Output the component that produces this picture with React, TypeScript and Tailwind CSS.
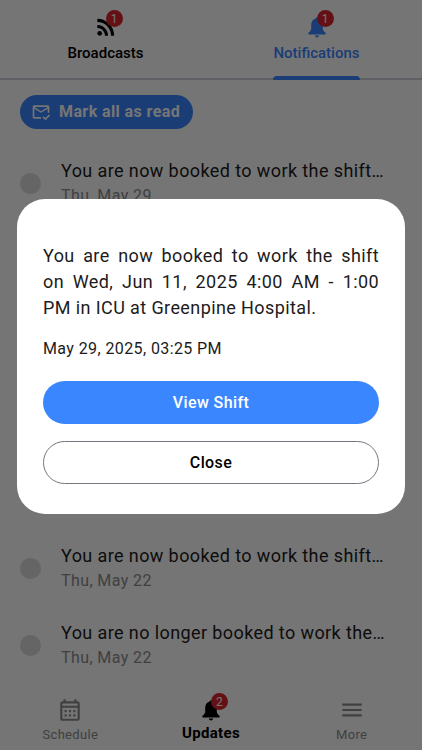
import React, { ReactNode } from 'react'
import {
  MdMenu,
  MdOutlineCalendarMonth,
  MdOutlineMarkEmailRead,
  MdRssFeed,
} from 'react-icons/md'

type Notification = {
  id: number
  message: string
  date: string
}

const notifications: Notification[] = [
  { id: 1, message: 'You are now booked to work the shift…', date: 'Thu, May 29' },
  { id: 2, message: 'You are now booked to work the shift…', date: 'Thu, May 29' },
  { id: 3, message: 'You are now booked to work the shift…', date: 'Wed, May 28' },
  { id: 4, message: 'You are now booked to work the shift…', date: 'Tue, May 27' },
  { id: 5, message: 'You are now booked to work the shift…', date: 'Fri, May 23' },
  { id: 6, message: 'You are now booked to work the shift…', date: 'Thu, May 22' },
  { id: 7, message: 'You are no longer booked to work the…', date: 'Thu, May 22' },
]

const BellIcon = () => (
  <svg width="26" height="26" viewBox="0 0 26 26" fill="currentColor" aria-hidden="true">
    <path d="M13 3.4c.9 0 1.500.6 1.600 1.400 2.900.7 4.200 3.100 4.200 6.200v3.600c0 1.800 1.200 3 2.400 4 .3.200.4.500.4.800v.6c0 .4-.3.600-.6.600H5c-.3 0-.6-.2-.6-.6v-.6c0-.3.1-.6.4-.8 1.200-1 2.400-2.200 2.400-4V11c0-3.100 1.300-5.500 4.200-6.200.1-.8.7-1.400 1.600-1.400z" />
    <path d="M10.900 21.400h4.200c-.2 1.200-1 2-2.100 2s-1.900-.8-2.100-2z" />
  </svg>
)

const IconWithBadge = ({ count, children }: { count: number; children: ReactNode }) => (
  <span className="relative">
    {children}
    <span className="absolute -top-1 left-[13px] flex h-[17px] w-[17px] items-center justify-center rounded-full bg-[#d9232e] text-xs leading-none font-normal tracking-normal text-white">
      {count}
    </span>
  </span>
)

const Tabs = () => (
  <nav className="grid grid-cols-2 border-b-2 border-[#cfd1d8] text-[15px] leading-5 font-medium">
    <a href="#broadcasts" className="flex flex-col items-center pt-3.5 text-black">
      <IconWithBadge count={1}>
        <MdRssFeed size={26} />
      </IconWithBadge>
      <span className="mt-[3px]">Broadcasts</span>
    </a>
    <a href="#notifications" className="-mb-0.5 flex flex-col items-center pt-3.5 text-[#3a86ff]">
      <IconWithBadge count={1}>
        <BellIcon />
      </IconWithBadge>
      <span className="mt-[3px] flex flex-col">
        Notifications
        <span className="mt-[13px] h-1 rounded-t-sm bg-[#3a86ff]" />
      </span>
    </a>
  </nav>
)

const NotificationRow = ({ notification }: { notification: Notification }) => (
  <li className="flex items-center gap-5">
    <span className="h-[21px] w-[21px] shrink-0 rounded-full bg-[#dcdcdc]" />
    <div className="min-w-0 flex-1 tracking-wide">
      <p className="truncate text-lg leading-[26px] text-[#1d1b20]">{notification.message}</p>
      <p className="text-base leading-6 text-[#8c8c8c]">{notification.date}</p>
    </div>
  </li>
)

const BottomNav = () => (
  <nav className="grid grid-cols-3 pb-[5px] text-[13px] leading-5 tracking-wide text-[#8c8c8c]">
    <a href="#schedule" className="flex flex-col items-center justify-end">
      <MdOutlineCalendarMonth size={26} />
      <span className="mt-0.5">Schedule</span>
    </a>
    <a
      href="#updates"
      className="flex flex-col items-center justify-end pb-0.5 text-[15px] font-bold text-black"
    >
      <IconWithBadge count={2}>
        <BellIcon />
      </IconWithBadge>
      <span>Updates</span>
    </a>
    <a href="#more" className="flex flex-col items-center justify-end">
      <MdMenu size={26} />
      <span className="mt-0.5">More</span>
    </a>
  </nav>
)

const ShiftDialog = () => (
  <div className="fixed inset-0 flex items-center justify-center bg-black/54 px-[17px] pb-[37px]">
    <div
      role="dialog"
      aria-modal="true"
      className="w-full max-w-lg rounded-[28px] bg-white px-[26px] pt-11 pb-[30px] tracking-wide text-[#1d1b20]"
    >
      <p className="text-justify text-lg leading-[26px]">
        You are now booked to work the shift on Wed, Jun 11, 2025 4:00 AM - 1:00 PM in ICU at
        Greenpine Hospital.
      </p>
      <p className="mt-4 text-base leading-6">May 29, 2025, 03:25 PM</p>
      <button
        type="button"
        className="mt-5 h-[43px] w-full rounded-full bg-[#3a86ff] text-base font-medium tracking-wide text-white"
      >
        View Shift
      </button>
      <button
        type="button"
        className="mt-[17px] h-[43px] w-full rounded-full border border-[#79747e] text-base font-medium tracking-wide text-black"
      >
        Close
      </button>
    </div>
  </div>
)

const App = () => (
  <div className="flex h-screen flex-col bg-white font-['Roboto',sans-serif]">
    <Tabs />
    <main className="min-h-0 flex-1 overflow-hidden px-5 pt-[15px]">
      <button
        type="button"
        className="flex h-[34px] items-center gap-2 rounded-full bg-[#3a86ff] pr-[13px] pl-[11px] text-base font-bold tracking-wide text-white"
      >
        <MdOutlineMarkEmailRead size={20} />
        Mark all as read
      </button>
      <ul className="mt-[29px] flex flex-col gap-[27px]">
        {notifications.map((notification) => (
          <NotificationRow key={notification.id} notification={notification} />
        ))}
      </ul>
    </main>
    <BottomNav />
    <ShiftDialog />
  </div>
)

export default App
